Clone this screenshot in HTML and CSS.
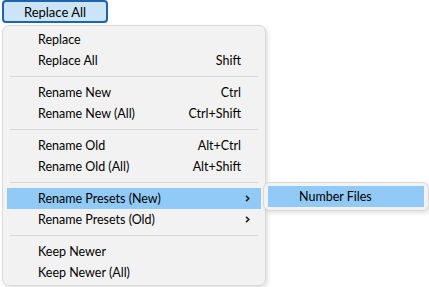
FILE: index.html
```html
<!DOCTYPE html>
<html lang="en">
<head>
  <meta charset="UTF-8">
  <title>Replace All</title>
  <link rel="stylesheet" href="styles.css">
</head>
<body>
  <button class="split-btn">Replace All</button>

  <div class="menu">
    <div class="item"><span>Replace</span></div>
    <div class="item"><span>Replace All</span><span class="key">Shift</span></div>
    <div class="sep"></div>
    <div class="item"><span>Rename New</span><span class="key">Ctrl</span></div>
    <div class="item"><span>Rename New (All)</span><span class="key">Ctrl+Shift</span></div>
    <div class="sep"></div>
    <div class="item"><span>Rename Old</span><span class="key">Alt+Ctrl</span></div>
    <div class="item"><span>Rename Old (All)</span><span class="key">Alt+Shift</span></div>
    <div class="sep"></div>
    <div class="item active sub"><span>Rename Presets (New)</span>
      <svg class="chev" width="5" height="7" viewBox="0 0 5 7"><path d="M1 0.8 L3.8 3.5 L1 6.2" fill="none" stroke="#222" stroke-width="1.6"/></svg>
    </div>
    <div class="item sub"><span>Rename Presets (Old)</span>
      <svg class="chev" width="5" height="7" viewBox="0 0 5 7"><path d="M1 0.8 L3.8 3.5 L1 6.2" fill="none" stroke="#222" stroke-width="1.6"/></svg>
    </div>
    <div class="sep"></div>
    <div class="item"><span>Keep Newer</span></div>
    <div class="item"><span>Keep Newer (All)</span></div>
  </div>

  <!-- подменю -->
  <div class="menu submenu">
    <div class="item active"><span>Number Files</span></div>
  </div>
</body>
</html>
```

FILE: styles.css
```css
body {
  margin: 0;
  background: #fff;
  font-family: Lato, "Noto Sans", sans-serif;
  font-size: 12.5px;
  color: #000;
  position: relative;
  width: 429px;
  height: 287px;
  overflow: hidden;
}

.split-btn {
  display: block;
  margin: 0 0 0 2px;
  width: 106px;
  height: 23px;
  padding: 0;
  border: 2px solid #1e63ad;
  border-radius: 4px;
  background: #cce4f7;
  font: inherit;
  font-size: 13px;
  color: #000;
}

.menu {
  margin: 2px 0 0 2px;
  width: 262px;
  padding: 3px 0 2px;
  background: #f2f2f2;
  border: 1px solid #dadada;
  border-radius: 7px;
  box-shadow: 2px 2px 4px rgba(0, 0, 0, 0.12);
}

.item {
  display: flex;
  align-items: center;
  justify-content: space-between;
  height: 21px;
  margin: 0 4px;
  padding: 0 20px 0 31px;
}

.item.active {
  background: #91c9f7;
}

.item.sub {
  padding-right: 11px;
}

.chev {
  display: block;
}

.sep {
  height: 1px;
  margin: 5px 7px;
  background: #d8d8d8;
}

.submenu {
  position: absolute;
  left: 263px;
  top: 182px;
  margin: 0;
  width: 164px;
  padding: 3px 0 3px;
}

.submenu .item {
  height: 21px;
}
```
